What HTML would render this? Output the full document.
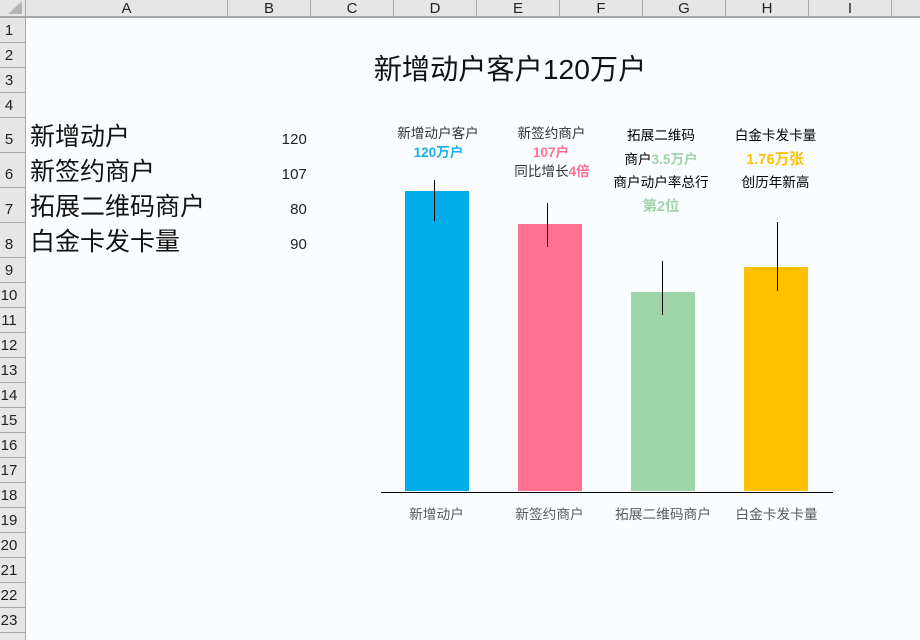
<!DOCTYPE html>
<html lang="zh"><head><meta charset="utf-8"><style>
html,body{margin:0;padding:0;overflow:hidden;width:920px;height:640px}
body{position:relative;background:#fafdff;font-family:"Liberation Sans","Noto Sans CJK SC",sans-serif;color:#000}
div{position:absolute;box-sizing:border-box}
.t{white-space:nowrap;transform:translateX(-50%);line-height:1}
.c{top:0;height:18px;background:#e6e6e6;border-right:1px solid #a8a8a8;border-bottom:2px solid #a6a6a6;text-align:center;font-size:15px;line-height:17px;color:#222;overflow:hidden}
.r{left:0;width:26px;background:#e6e6e6;border-right:1px solid #a8a8a8;border-bottom:1px solid #a8a8a8;text-align:center;padding-right:7px;font-size:15px;color:#222;overflow:hidden}
.l{left:30px;font-size:25px;line-height:1;white-space:nowrap;color:#111}
.n{right:613px;font-size:15px;line-height:1;color:#222;letter-spacing:.1px}
.s{font-size:13.6px;color:#333}.k{color:#000}
.b{font-weight:bold}
.x{font-size:13.7px;color:#595959;top:508px}
.bar{width:64px}.e{width:1px;background:#000}
</style></head><body>
<div class="c" style="left:0;width:26px"></div>
<div style="left:8px;top:1px;width:0;height:0;border-left:14px solid transparent;border-bottom:13px solid #b4b4b4"></div>
<div class="c" style="left:26px;width:202px">A</div>
<div class="c" style="left:228px;width:83px">B</div>
<div class="c" style="left:311px;width:83px">C</div>
<div class="c" style="left:394px;width:83px">D</div>
<div class="c" style="left:477px;width:83px">E</div>
<div class="c" style="left:560px;width:83px">F</div>
<div class="c" style="left:643px;width:83px">G</div>
<div class="c" style="left:726px;width:83px">H</div>
<div class="c" style="left:809px;width:83px">I</div>
<div class="c" style="left:892px;width:28px;border-right:0"></div>
<div class="r" style="top:18px;height:25px;line-height:25px">1</div>
<div class="r" style="top:43px;height:25px;line-height:25px">2</div>
<div class="r" style="top:68px;height:25px;line-height:25px">3</div>
<div class="r" style="top:93px;height:25px;line-height:25px">4</div>
<div class="r" style="top:118px;height:35px;line-height:43px">5</div>
<div class="r" style="top:153px;height:35px;line-height:43px">6</div>
<div class="r" style="top:188px;height:35px;line-height:43px">7</div>
<div class="r" style="top:223px;height:35px;line-height:43px">8</div>
<div class="r" style="top:258px;height:25px;line-height:25px">9</div>
<div class="r" style="top:283px;height:25px;line-height:25px">10</div>
<div class="r" style="top:308px;height:25px;line-height:25px">11</div>
<div class="r" style="top:333px;height:25px;line-height:25px">12</div>
<div class="r" style="top:358px;height:25px;line-height:25px">13</div>
<div class="r" style="top:383px;height:25px;line-height:25px">14</div>
<div class="r" style="top:408px;height:25px;line-height:25px">15</div>
<div class="r" style="top:433px;height:25px;line-height:25px">16</div>
<div class="r" style="top:458px;height:25px;line-height:25px">17</div>
<div class="r" style="top:483px;height:25px;line-height:25px">18</div>
<div class="r" style="top:508px;height:25px;line-height:25px">19</div>
<div class="r" style="top:533px;height:25px;line-height:25px">20</div>
<div class="r" style="top:558px;height:25px;line-height:25px">21</div>
<div class="r" style="top:583px;height:25px;line-height:25px">22</div>
<div class="r" style="top:608px;height:25px;line-height:25px">23</div>
<div class="r" style="top:633px;height:7px;line-height:25px;border-bottom:0">24</div>

<div class="l" style="top:125px">新增动户</div>
<div class="l" style="top:160px">新签约商户</div>
<div class="l" style="top:195px">拓展二维码商户</div>
<div class="l" style="top:230px">白金卡发卡量</div>
<div class="n" style="top:132px">120</div>
<div class="n" style="top:167px">107</div>
<div class="n" style="top:202px">80</div>
<div class="n" style="top:237px">90</div>

<div class="t" style="left:510px;top:55px;font-size:28.2px;color:#111">新增动户客户120万户</div>

<div class="bar" style="left:405px;top:191px;height:300px;background:#00ade9"></div>
<div class="bar" style="left:518px;top:224px;height:267px;background:#ff7191"></div>
<div class="bar" style="left:631px;top:292px;height:199px;background:#9dd5a8"></div>
<div class="bar" style="left:744px;top:267px;height:224px;background:#ffc000"></div>
<div class="e" style="left:434px;top:180px;height:41px"></div>
<div class="e" style="left:547px;top:203px;height:44px"></div>
<div class="e" style="left:662px;top:261px;height:54px"></div>
<div class="e" style="left:777px;top:222px;height:69px"></div>
<div style="left:381px;top:492px;width:452px;height:1px;background:#000"></div>

<div class="t s" style="left:438px;top:127px">新增动户客户</div>
<div class="t s b" style="left:438.5px;top:146px;color:#1cb0ea">120万户</div>
<div class="t s" style="left:551.5px;top:127px">新签约商户</div>
<div class="t s b" style="left:551px;top:146px;color:#ff7191">107户</div>
<div class="t s" style="left:552px;top:165px">同比增长<b style="color:#ff7191">4倍</b></div>

<div class="t s k" style="left:661px;top:129px">拓展二维码</div>
<div class="t s k" style="left:661px;top:153px">商户<b style="color:#9dd5a8">3.5万户</b></div>
<div class="t s k" style="left:661px;top:176px">商户动户率总行</div>
<div class="t s b" style="left:661px;top:200px;color:#9dd5a8;font-size:14.5px">第2位</div>

<div class="t s k" style="left:775.5px;top:129px">白金卡发卡量</div>
<div class="t s b" style="left:775px;top:153px;color:#ffc000;font-size:14.6px">1.76万张</div>
<div class="t s k" style="left:775.5px;top:176px">创历年新高</div>

<div class="t x" style="left:436.5px">新增动户</div>
<div class="t x" style="left:549.5px">新签约商户</div>
<div class="t x" style="left:663px">拓展二维码商户</div>
<div class="t x" style="left:776.5px">白金卡发卡量</div>
</body></html>
